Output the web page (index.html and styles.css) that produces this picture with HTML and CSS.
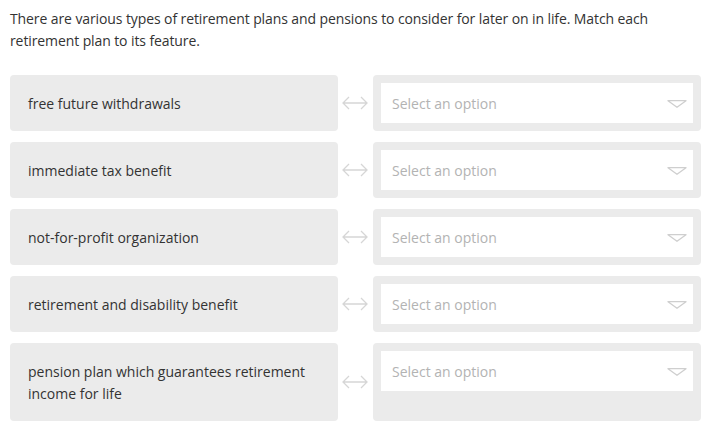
FILE: index.html
```html
<!DOCTYPE html>
<html lang="en">
<head>
    <meta charset="UTF-8">
    <meta name="viewport" content="width=device-width, initial-scale=1.0">
    <title>Match retirement plans</title>
    <link rel="stylesheet" href="styles.css">
</head>
<body>
    <div class="question">
        <p class="prompt">There are various types of retirement plans and pensions to consider for later on in life. Match each retirement plan to its feature.</p>

        <div class="matches">
            <div class="match-row">
                <div class="term">free future withdrawals</div>
                <div class="link">
                    <svg width="26" height="14" viewBox="0 0 26 14"><path d="M7 1 L1 7 L7 13 M1 7 H25 M19 1 L25 7 L19 13" fill="none" stroke="#d6d6d6" stroke-width="1.3"/></svg>
                </div>
                <div class="answer">
                    <div class="select"><span>Select an option</span><svg width="20" height="8" viewBox="0 0 20 8"><path d="M1 0.7 H19 L10 7.3 Z" fill="none" stroke="#cfcfcf" stroke-width="1.3" stroke-linejoin="round"/></svg></div>
                </div>
            </div>

            <div class="match-row">
                <div class="term">immediate tax benefit</div>
                <div class="link">
                    <svg width="26" height="14" viewBox="0 0 26 14"><path d="M7 1 L1 7 L7 13 M1 7 H25 M19 1 L25 7 L19 13" fill="none" stroke="#d6d6d6" stroke-width="1.3"/></svg>
                </div>
                <div class="answer">
                    <div class="select"><span>Select an option</span><svg width="20" height="8" viewBox="0 0 20 8"><path d="M1 0.7 H19 L10 7.3 Z" fill="none" stroke="#cfcfcf" stroke-width="1.3" stroke-linejoin="round"/></svg></div>
                </div>
            </div>

            <div class="match-row">
                <div class="term">not-for-profit organization</div>
                <div class="link">
                    <svg width="26" height="14" viewBox="0 0 26 14"><path d="M7 1 L1 7 L7 13 M1 7 H25 M19 1 L25 7 L19 13" fill="none" stroke="#d6d6d6" stroke-width="1.3"/></svg>
                </div>
                <div class="answer">
                    <div class="select"><span>Select an option</span><svg width="20" height="8" viewBox="0 0 20 8"><path d="M1 0.7 H19 L10 7.3 Z" fill="none" stroke="#cfcfcf" stroke-width="1.3" stroke-linejoin="round"/></svg></div>
                </div>
            </div>

            <div class="match-row">
                <div class="term">retirement and disability benefit</div>
                <div class="link">
                    <svg width="26" height="14" viewBox="0 0 26 14"><path d="M7 1 L1 7 L7 13 M1 7 H25 M19 1 L25 7 L19 13" fill="none" stroke="#d6d6d6" stroke-width="1.3"/></svg>
                </div>
                <div class="answer">
                    <div class="select"><span>Select an option</span><svg width="20" height="8" viewBox="0 0 20 8"><path d="M1 0.7 H19 L10 7.3 Z" fill="none" stroke="#cfcfcf" stroke-width="1.3" stroke-linejoin="round"/></svg></div>
                </div>
            </div>

            <div class="match-row">
                <div class="term">pension plan which guarantees retirement income for life</div>
                <div class="link">
                    <svg width="26" height="14" viewBox="0 0 26 14"><path d="M7 1 L1 7 L7 13 M1 7 H25 M19 1 L25 7 L19 13" fill="none" stroke="#d6d6d6" stroke-width="1.3"/></svg>
                </div>
                <div class="answer">
                    <div class="select"><span>Select an option</span><svg width="20" height="8" viewBox="0 0 20 8"><path d="M1 0.7 H19 L10 7.3 Z" fill="none" stroke="#cfcfcf" stroke-width="1.3" stroke-linejoin="round"/></svg></div>
                </div>
            </div>
        </div>
    </div>
</body>
</html>
```

FILE: styles.css
```css
body {
    margin: 0;
    background: #fff;
    font-family: "Open Sans", "Liberation Sans", sans-serif;
    font-size: 14px;
    color: #333;
}
.question {
    width: 691px;
    padding: 8px 0 0 10px;
}
.prompt {
    margin: 0 0 23px 0;
    line-height: 22px;
    letter-spacing: -0.1px;
}
.matches {
    display: flex;
    flex-direction: column;
    gap: 11px;
}
.match-row {
    display: grid;
    grid-template-columns: 328px 35px 328px;
}
.term {
    background-color: #ebebeb;
    border-radius: 4px;
    padding: 18px 18px 16px;
    line-height: 22px;
    color: #333;
}
.link {
    display: flex;
    align-items: center;
    justify-content: center;
}
.link svg {
    display: block;
    margin-left: -2px;
}
.answer {
    background-color: #ebebeb;
    border-radius: 4px;
    padding: 8px;
}
.select {
    background: #fff;
    height: 40px;
    display: flex;
    align-items: center;
    justify-content: space-between;
    padding: 0 6px 0 11px;
    color: #b3b3b3;
}
.select svg {
    display: block;
    margin-top: 2px;
}
```
